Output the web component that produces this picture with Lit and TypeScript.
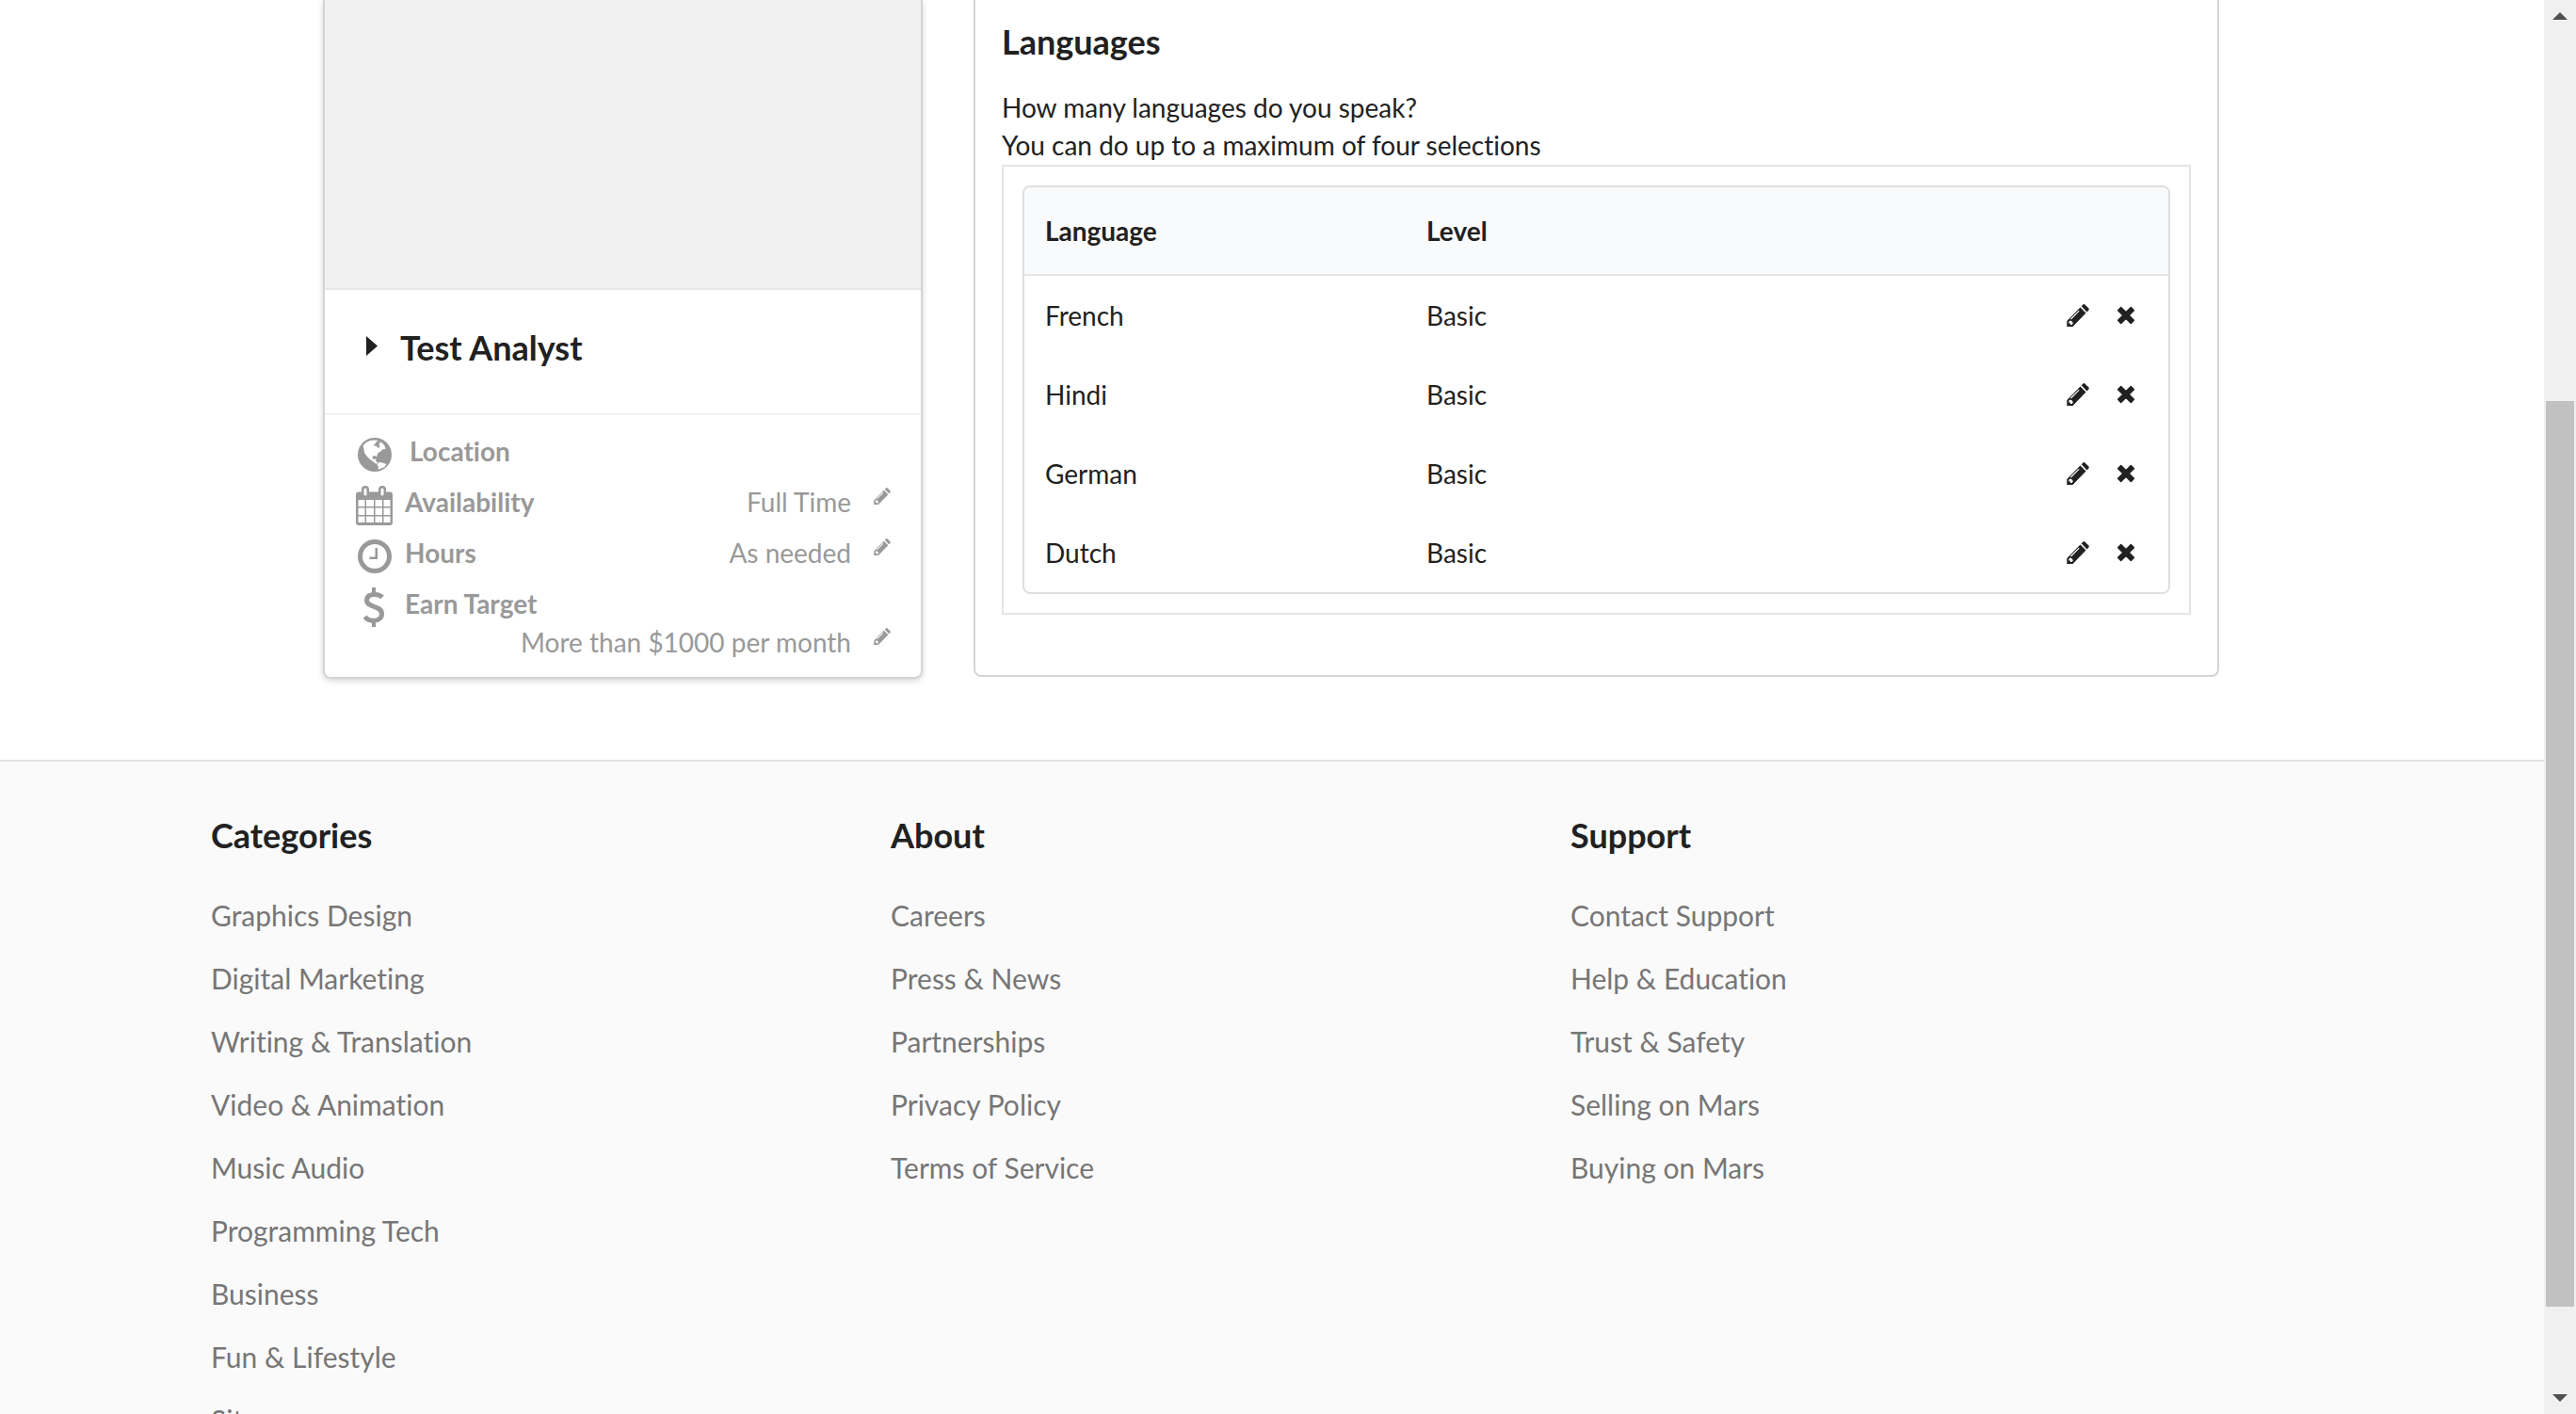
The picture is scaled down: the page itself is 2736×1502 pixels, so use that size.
import { LitElement, html, css, svg } from "lit";
import { customElement } from "lit/decorators.js";

const globe = svg`<circle cx="18" cy="18" r="18"/><path fill="#fff" d="M5.500 8.500L9 5L13 3L17 2.400L22 3L19.500 4.500L18.500 6.500L16.500 8L20 9L22 11L23.500 9.500L22.500 7L24 4.500L27 6.500L29 9.500L29.500 12L26 12.500L24.500 14.500L21.500 16L20.500 18.500L20 20.500L18.500 19L16 19.500L15.500 22L17.500 23L19.500 22L19 24.500L21 26.500L20 28L16.500 25.500L12.500 22.500L9.500 19.500L7 16L6.500 12ZM20.500 28.500L22.500 25.800L26 26.500L30.500 28L28.500 31L25 32.500L21.500 33.800L22 31Z"/>`;
const calendar = svg`<path fill-rule="evenodd" d="M3 6.500H6V4a4 4 0 0 1 8 0v2.500H24V4a4 4 0 0 1 8 0v2.500h4a3 3 0 0 1 3 3V39a3 3 0 0 1-3 3H3a3 3 0 0 1-3-3V9.500a3 3 0 0 1 3-3ZM10 2.500a1.500 1.500 0 0 0-1.500 1.500V9a1.500 1.500 0 0 0 3 0V4A1.500 1.500 0 0 0 10 2.500ZM28 2.500A1.500 1.500 0 0 0 26.500 4V9a1.500 1.500 0 0 0 3 0V4A1.500 1.500 0 0 0 28 2.500ZM2.500 15v7h7v-7ZM11 15v7h8v-7ZM20.500 15v7h7.500v-7ZM29.500 15v7h7v-7ZM2.500 23.500V31h7v-7.500ZM11 23.500V31h8v-7.500ZM20.500 23.500V31H28v-7.500ZM29.500 23.500V31h7v-7.500ZM2.500 32.500V39h7v-6.500ZM11 32.500V39h8v-6.500ZM20.500 32.500V39H28v-6.500ZM29.500 32.500V39h7v-6.500Z"/>`;
const clock = svg`<circle cx="18" cy="18" r="15.500" fill="none" stroke="currentColor" stroke-width="5"/><path d="M18.500 9H21V21H12.500V18.500H18.500Z"/>`;
const dollar = svg`<path fill="none" stroke="currentColor" stroke-width="5" d="M20 10.500C16 6 3.500 6 3.500 13.500C3.500 22 19.500 18.500 19.500 28C19.500 37 6 37 1.500 31"/><path d="M9 0h4v6H9ZM9 35h4v7H9Z"/>`;
const pencil = svg`<path fill-rule="evenodd" d="M15.700 2.200l1.500-1.500q1.200-1.200 2.400 0l3.600 3.600q1.200 1.200 0 2.400l-1.700 1.700ZM14.500 3.500l6 6L6.500 23.900H.300V17.900ZM12.800 6.800L4 15.600l.8.800L13.600 7.600ZM2.300 18.800V20.500h1.600V22H5.500L6.800 20.600Q6.500 18 3.700 17.500Z"/>`;
const cross = svg`<path d="M4.700 1.600L10 6.900 15.300 1.600 18.400 4.700 13.100 10 18.400 15.300 15.300 18.400 10 13.100 4.700 18.400 1.600 15.300 6.900 10 1.600 4.700Z" stroke="currentColor" stroke-width="1.500" stroke-linejoin="round"/>`;

const details = [
  { label: "Location", icon: globe, box: "0 0 36 36", w: 36, h: 36, cls: "wide", value: "" },
  { label: "Availability", icon: calendar, box: "0 0 39 42", w: 39, h: 42, cls: "", value: "Full Time" },
  { label: "Hours", icon: clock, box: "0 0 36 36", w: 36, h: 36, cls: "", value: "As needed" },
  { label: "Earn Target", icon: dollar, box: "0 0 23 42", w: 23, h: 42, cls: "wrap", value: "More than $1000 per month" },
];

const languages = ["French", "Hindi", "German", "Dutch"];

const footer = [
  {
    title: "Categories",
    links: ["Graphics Design", "Digital Marketing", "Writing & Translation", "Video & Animation", "Music Audio", "Programming Tech", "Business", "Fun & Lifestyle", "Sitemap"],
  },
  { title: "About", links: ["Careers", "Press & News", "Partnerships", "Privacy Policy", "Terms of Service"] },
  { title: "Support", links: ["Contact Support", "Help & Education", "Trust & Safety", "Selling on Mars", "Buying on Mars"] },
];

@customElement("app-root")
export class AppRoot extends LitElement {
  static styles = css`
    :host {
      display: flex;
      height: 100vh;
      overflow: hidden;
      background: #fff;
      color: #212121;
      font: 28px/40px Lato, "Liberation Sans", sans-serif;
      font-variant-ligatures: none;
    }
    * { box-sizing: border-box; }
    h2, h3, p, ul, dl, dd, dt { margin: 0; padding: 0; }
    svg { display: block; fill: currentColor; }
    button { border: 0; padding: 0; background: none; color: inherit; cursor: pointer; }
    .page { flex: 1; min-width: 0; overflow: hidden; display: flex; flex-direction: column; }
    .container { max-width: 2254px; width: 100%; margin: 0 auto; }
    .profile {
      display: grid;
      grid-template-columns: 637fr 1323fr;
      gap: 54px;
      align-items: start;
      padding: 0 121px 0 119px;
    }
    .card {
      border: 2px solid #d4d4d5;
      border-top: 0;
      border-radius: 0 0 8px 8px;
      box-shadow: 0 2px 6px #d4d4d5;
    }
    .photo { height: 308px; background: #f1f1f1; border-bottom: 2px solid #e8e8e8; }
    .title { display: flex; align-items: center; gap: 24px; padding: 0 44px 9px; height: 131px; }
    .title svg { margin-bottom: 4px; }
    h2, h3 { font-size: 36px; line-height: 46px; font-weight: 700; }
    .details { border-top: 2px solid #f2f2f2; padding: 20px 28px 19px 33px; color: #999; line-height: 36px; }
    .detail { display: grid; grid-template-columns: 39px 1fr auto 22px; min-height: 54px; }
    .glyph { display: flex; justify-content: center; align-items: center; height: 44px; }
    .detail dt { font-weight: 700; padding-left: 13px; }
    .wide dt { padding-left: 18px; }
    .detail dd { padding-right: 24px; }
    .detail button { height: 24px; }
    .wrap { grid-template-rows: 41px 36px; }
    .wrap dd { grid-column: 1 / 4; grid-row: 2; text-align: right; }
    .wrap button { grid-column: 4; grid-row: 2; }
    .languages {
      border: 2px solid #d4d4d5;
      border-top: 0;
      border-radius: 0 0 8px 8px;
      padding: 21px 28px 64px;
    }
    .languages h2 { margin-bottom: 27px; }
    .frame { margin-top: 1px; border: 2px solid #e5e5e5; padding: 20px; }
    table {
      width: 100%;
      table-layout: fixed;
      border: 2px solid #dedfdf;
      border-radius: 8px;
      border-spacing: 0;
      overflow: hidden;
    }
    th, td { text-align: left; padding: 0 22px; height: 84px; }
    th { height: 94px; background: #f9fafb; border-bottom: 2px solid #e4e5e6; }
    .actions { display: flex; justify-content: flex-end; align-items: center; gap: 29px; padding-right: 13px; }
    .footer { margin-top: 86px; background: #fafafa; border-top: 2px solid #e2e2e2; flex: 1 0 auto; }
    .columns { display: grid; grid-template-columns: 722fr 722fr 810fr; padding-top: 55px; }
    .columns h3 { margin-bottom: 29px; }
    ul { list-style: none; font-size: 30px; line-height: 67px; }
    a { color: #767676; text-decoration: none; }
    .scrollbar { width: 34px; background: #f0f0f0; color: #505050; display: flex; flex-direction: column; align-items: center; }
    .scrollbar button { height: 34px; flex: none; display: flex; align-items: center; }
    .track { flex: 1; display: flex; flex-direction: column; }
    .before { flex: 392; }
    .thumb { flex: 962; width: 30px; background: #c1c1c1; }
    .after { flex: 80; }
  `;

  private edit(label: string, size: number) {
    return html`<button aria-label="Edit ${label}"><svg width=${size} height=${size} viewBox="0 0 24 24">${pencil}</svg></button>`;
  }

  render() {
    return html`
      <div class="page">
        <main class="container profile">
          <section class="card">
            <div class="photo"></div>
            <div class="title">
              <svg width="12" height="21" viewBox="0 0 12 21"><path d="M0 0L12 10.500L0 21Z" /></svg>
              <h2>Test Analyst</h2>
            </div>
            <dl class="details">
              ${details.map(
                (d) => html`<div class="detail ${d.cls}">
                  <span class="glyph"><svg width=${d.w} height=${d.h} viewBox=${d.box}>${d.icon}</svg></span>
                  <dt>${d.label}</dt>
                  ${d.value ? html`<dd>${d.value}</dd>${this.edit(d.label, 18)}` : null}
                </div>`
              )}
            </dl>
          </section>
          <section class="languages">
            <h2>Languages</h2>
            <p>How many languages do you speak?</p>
            <p>You can do up to a maximum of four selections</p>
            <div class="frame">
              <table>
                <thead>
                  <tr><th>Language</th><th>Level</th><th></th></tr>
                </thead>
                <tbody>
                  ${languages.map(
                    (name) => html`<tr>
                      <td>${name}</td>
                      <td>Basic</td>
                      <td>
                        <div class="actions">
                          ${this.edit(name, 24)}
                          <button aria-label="Remove ${name}"><svg width="20" height="20" viewBox="0 0 20 20">${cross}</svg></button>
                        </div>
                      </td>
                    </tr>`
                  )}
                </tbody>
              </table>
            </div>
          </section>
        </main>
        <footer class="footer">
          <div class="container columns">
            ${footer.map(
              (c) => html`<nav aria-label=${c.title}>
                <h3>${c.title}</h3>
                <ul>${c.links.map((l) => html`<li><a href="#">${l}</a></li>`)}</ul>
              </nav>`
            )}
          </div>
        </footer>
      </div>
      <div class="scrollbar">
        <button aria-label="Scroll up"><svg width="16" height="8" viewBox="0 0 16 8"><path d="M8 0L16 8H0Z" /></svg></button>
        <div class="track"><div class="before"></div><div class="thumb"></div><div class="after"></div></div>
        <button aria-label="Scroll down"><svg width="16" height="8" viewBox="0 0 16 8"><path d="M0 0H16L8 8Z" /></svg></button>
      </div>
    `;
  }
}
